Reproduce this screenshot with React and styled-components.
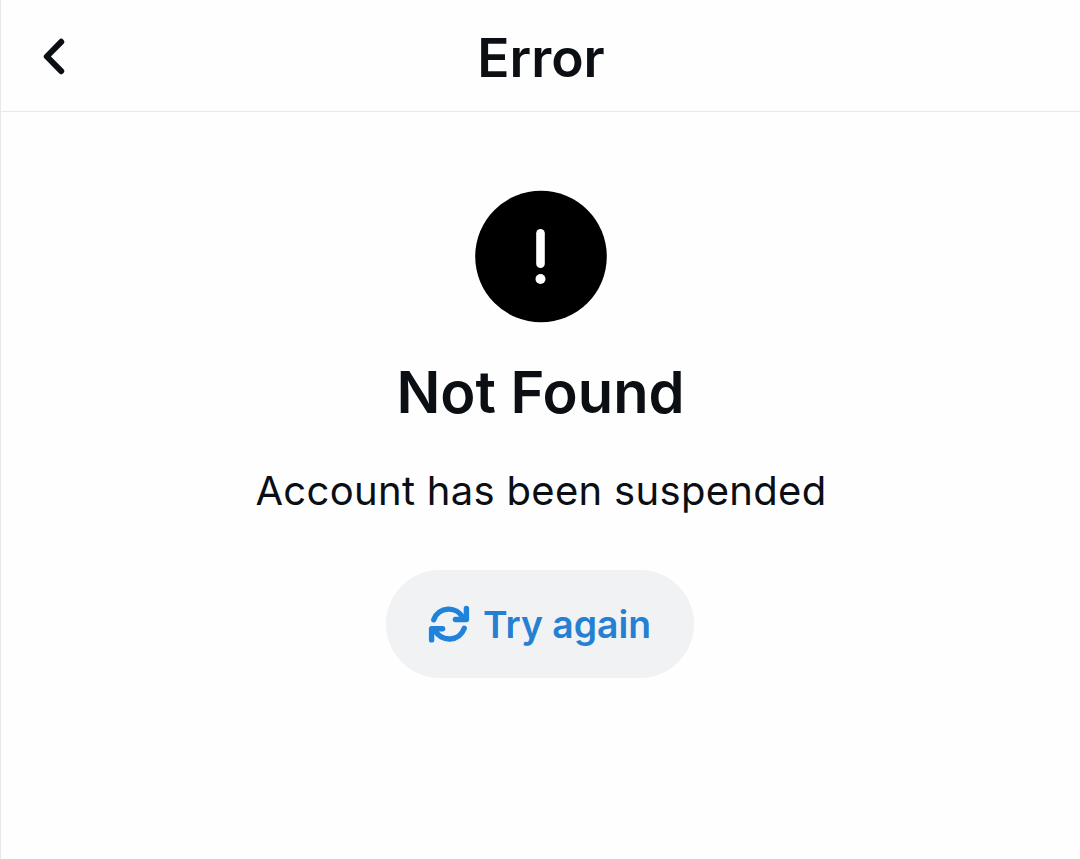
import React from "react";
import styled, { createGlobalStyle } from "styled-components";

const GlobalStyle = createGlobalStyle`
  * {
    box-sizing: border-box;
  }

  body {
    margin: 0;
    background: #fefefe;
    color: #0b0f14;
    font-family: "Inter", sans-serif;
  }
`;

const Screen = styled.main`
  min-height: 859px;
  border-left: 1px solid #e6e9ec;
`;

const Header = styled.header`
  display: grid;
  grid-template-columns: 107px 1fr 106px;
  align-items: center;
  height: 112px;
  border-bottom: 1px solid #e6e8ea;
`;

const BackButton = styled.button`
  display: flex;
  width: 48px;
  height: 48px;
  margin-left: 29px;
  padding: 0;
  border: 0;
  background: none;
  color: inherit;
  cursor: pointer;
`;

const Title = styled.h1`
  margin: 0;
  padding-top: 4px;
  font-size: 53.3px;
  font-weight: 600;
  line-height: 64px;
  text-align: center;
`;

const Content = styled.section`
  display: flex;
  flex-direction: column;
  align-items: center;
  padding-top: 78px;
`;

const Heading = styled.h2`
  margin: 32px 0 0;
  font-size: 57.8px;
  font-weight: 600;
  line-height: 72px;
`;

const Message = styled.p`
  margin: 37px 0 0 1px;
  font-size: 40px;
  letter-spacing: 0.31px;
  line-height: 52px;
`;

const RetryButton = styled.button`
  display: flex;
  align-items: center;
  gap: 13px;
  width: 308px;
  height: 108px;
  margin: 53px 1px 0 0;
  padding: 0 0 0 42px;
  border: 0;
  border-radius: 54px;
  background: #f0f2f4;
  color: #2680d2;
  font-family: inherit;
  font-size: 37.3px;
  font-weight: 600;
  white-space: nowrap;
  cursor: pointer;
`;

const Label = styled.span`
  padding-top: 2px;
  line-height: 48px;
`;

const ChevronIcon = () => (
  <svg width="48" height="48" viewBox="0 0 48 48" fill="none">
    <path
      d="M31.2 9.8 L16.8 24.5 L31.2 39.2"
      stroke="currentColor"
      strokeWidth="6"
      strokeLinecap="round"
      strokeLinejoin="round"
    />
  </svg>
);

const AlertIcon = () => (
  <svg width="134" height="134" viewBox="0 0 134 134">
    <circle cx="67" cy="66.5" r="65.8" fill="#000" />
    <path d="M66.5 43.3v30.5" stroke="#fff" strokeWidth="8.6" strokeLinecap="round" />
    <circle cx="66.5" cy="89" r="5" fill="#fff" />
  </svg>
);

const RefreshIcon = () => (
  <svg
    width="42"
    height="42"
    viewBox="0 0 42 42"
    fill="none"
    stroke="#1f82dc"
    strokeWidth="5.4"
    strokeLinecap="round"
    strokeLinejoin="round"
  >
    <path d="M5.8 16.6 A15.9 15.9 0 0 1 35 15 L38.4 16.5 M38.4 5.4 V16.5 H27.4" />
    <path d="M36.2 25.4 A15.9 15.9 0 0 1 7 27.3 L3.6 25.8 M3.6 36.9 V25.8 H14.6" />
  </svg>
);

const App = () => (
  <>
    <GlobalStyle />
    <Screen>
      <Header>
        <BackButton aria-label="Back">
          <ChevronIcon />
        </BackButton>
        <Title>Error</Title>
      </Header>
      <Content>
        <AlertIcon />
        <Heading>Not Found</Heading>
        <Message>Account has been suspended</Message>
        <RetryButton>
          <RefreshIcon />
          <Label>Try again</Label>
        </RetryButton>
      </Content>
    </Screen>
  </>
);

export default App;
